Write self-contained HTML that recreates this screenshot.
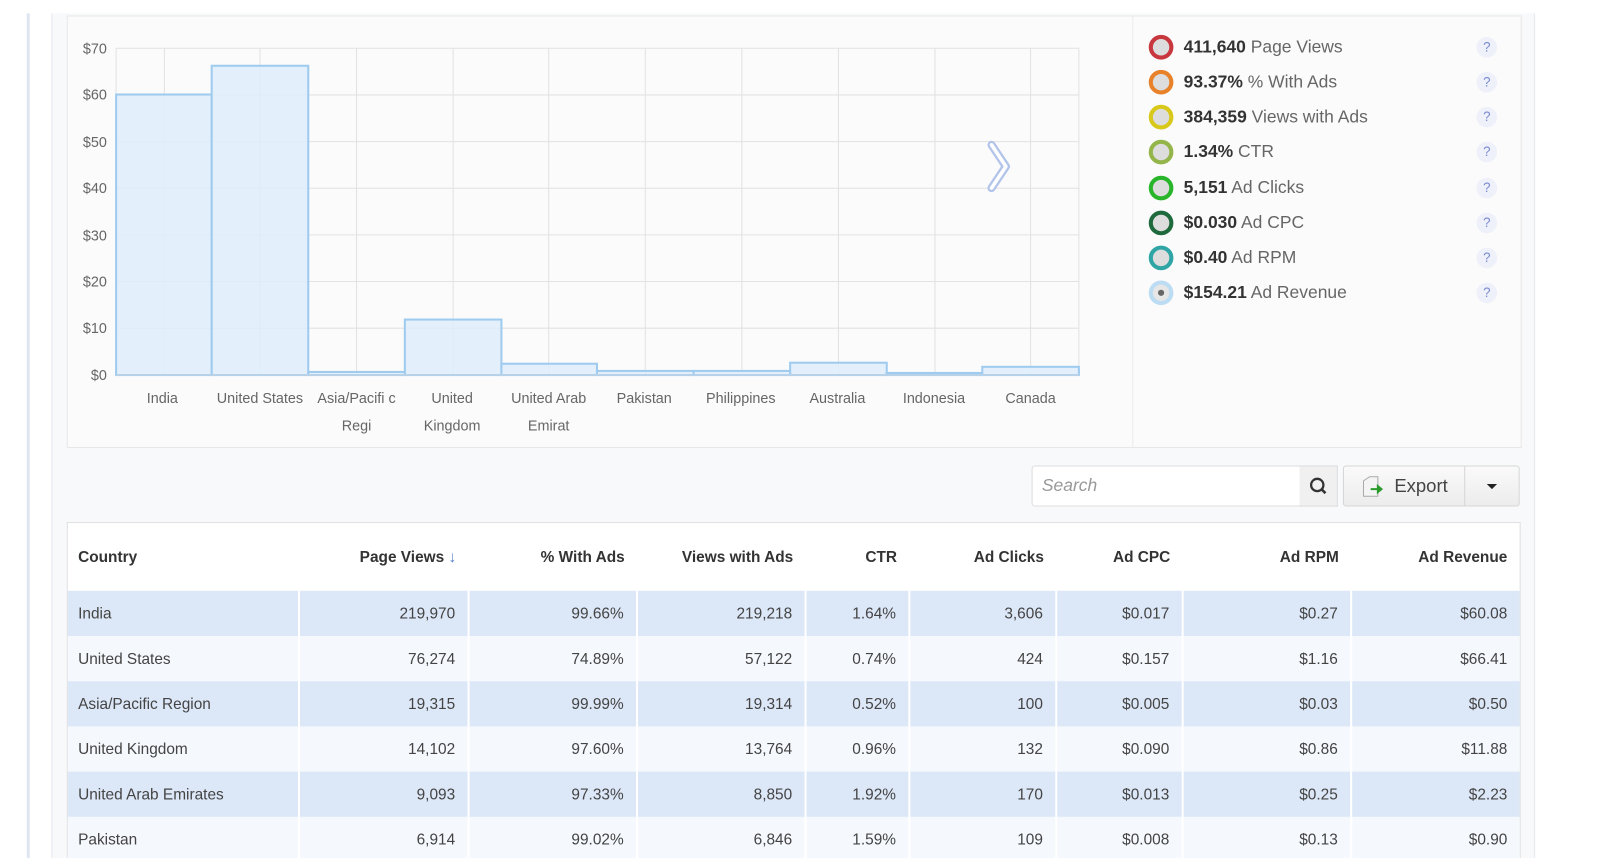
<!DOCTYPE html>
<html><head><meta charset="utf-8"><style>
html,body{margin:0;padding:0;width:1612px;height:866px;overflow:hidden;background:#fff;font-family:"Liberation Sans",sans-serif}
#w{position:absolute;left:0;top:0;width:1570px;height:843px;transform:scale(1.0275);transform-origin:0 0}
.a{position:absolute}
.lg{position:absolute;left:1118px;height:26px;font-size:17px;color:#666;line-height:26px}
.lg b{color:#333}
.dot{position:absolute;left:0;top:1px;width:16px;height:16px;border-radius:50%;border:4px solid;background:#ddd}
.lg span.t{position:absolute;left:34px;white-space:nowrap}
.q{position:absolute;left:1437px;width:20px;height:20px;border-radius:50%;background:#eef0fa;color:#7a8ad0;font-size:13px;text-align:center;line-height:20px}
table{position:absolute;left:66px;top:509px;width:1413px;border-collapse:collapse;font-size:15px;color:#444}
th{height:66px;text-align:right;padding:0 12px;color:#333;font-weight:bold}
td{height:44px;text-align:right;padding:0 12px;border-left:2px solid #fff}
tr.o td{background:#dce7f7}
tr.e td{background:#f5f8fd}
td:first-child,th:first-child{text-align:left;border-left:none;padding-left:10px}
</style></head><body><div id="w">
<div class="a" style="left:26px;top:13px;width:3px;height:822px;background:#dfe6f2"></div>
<div class="a" style="left:50px;top:13px;width:1442px;height:822px;background:#f8f9fb;border-left:1px solid #e6e9ee;border-right:1px solid #e6e9ee"></div>
<div class="a" style="left:65px;top:15px;width:1414px;height:419px;background:#fbfbfb;border:1px solid #e8e8e8"></div>
<div class="a" style="left:1102px;top:16px;width:1px;height:419px;background:#ececec"></div>
<svg class="a" style="left:65px;top:15px" width="1000" height="420" font-family="Liberation Sans" font-size="14" fill="#666">
<g stroke="#e2e2e2" stroke-width="1">
<line x1="48" y1="32" x2="985" y2="32"/><line x1="48" y1="77.4" x2="985" y2="77.4"/><line x1="48" y1="122.8" x2="985" y2="122.8"/><line x1="48" y1="168.2" x2="985" y2="168.2"/><line x1="48" y1="213.6" x2="985" y2="213.6"/><line x1="48" y1="259" x2="985" y2="259"/><line x1="48" y1="304.4" x2="985" y2="304.4"/>
<line x1="48" y1="32" x2="48" y2="350"/><line x1="985" y1="32" x2="985" y2="350"/>
<line x1="95" y1="32" x2="95" y2="350"/><line x1="188" y1="32" x2="188" y2="350"/><line x1="282" y1="32" x2="282" y2="350"/><line x1="376" y1="32" x2="376" y2="350"/><line x1="469" y1="32" x2="469" y2="350"/><line x1="563" y1="32" x2="563" y2="350"/><line x1="657" y1="32" x2="657" y2="350"/><line x1="751" y1="32" x2="751" y2="350"/><line x1="845" y1="32" x2="845" y2="350"/><line x1="938" y1="32" x2="938" y2="350"/>
</g>
<g fill="#deedfb" stroke="#9fcbef" stroke-width="2" fill-opacity=".85">
<rect x="48" y="77" width="93" height="273"/><rect x="141" y="49" width="94" height="301"/><rect x="235" y="347" width="94" height="3"/><rect x="329" y="296" width="94" height="54"/><rect x="423" y="339" width="93" height="11"/><rect x="516" y="346" width="94" height="4"/><rect x="610" y="346" width="94" height="4"/><rect x="704" y="338" width="94" height="12"/><rect x="798" y="348" width="93" height="2"/><rect x="891" y="342" width="94" height="8"/>
</g>
<line x1="48" y1="350" x2="985" y2="350" stroke="#cfd8e2"/>
<g text-anchor="end"><text x="39" y="37">$70</text><text x="39" y="82">$60</text><text x="39" y="128">$50</text><text x="39" y="173">$40</text><text x="39" y="219">$30</text><text x="39" y="264">$20</text><text x="39" y="309">$10</text><text x="39" y="355">$0</text></g>
<g text-anchor="middle"><text x="93" y="377">India</text><text x="188" y="377">United States</text><text x="282" y="377">Asia/Pacifi c</text><text x="282" y="404">Regi</text><text x="375" y="377">United</text><text x="375" y="404">Kingdom</text><text x="469" y="377">United Arab</text><text x="469" y="404">Emirat</text><text x="562" y="377">Pakistan</text><text x="656" y="377">Philippines</text><text x="750" y="377">Australia</text><text x="844" y="377">Indonesia</text><text x="938" y="377">Canada</text></g>
<path d="M900 126 L914 147 L900 168" fill="none" stroke="#b3c4ea" stroke-width="8" stroke-linejoin="round" stroke-linecap="round"/>
<path d="M900 126 L914 147 L900 168" fill="none" stroke="#fff" stroke-width="3.5" stroke-linejoin="round" stroke-linecap="round"/>
</svg>
<div class="lg" style="top:33px"><div class="dot" style="border-color:#c8373d"></div><span class="t"><b>411,640</b> Page Views</span></div>
<div class="lg" style="top:67px"><div class="dot" style="border-color:#e8822a"></div><span class="t"><b>93.37%</b> % With Ads</span></div>
<div class="lg" style="top:101px"><div class="dot" style="border-color:#d8c81a"></div><span class="t"><b>384,359</b> Views with Ads</span></div>
<div class="lg" style="top:135px"><div class="dot" style="border-color:#93b54a"></div><span class="t"><b>1.34%</b> CTR</span></div>
<div class="lg" style="top:170px"><div class="dot" style="border-color:#29b52a"></div><span class="t"><b>5,151</b> Ad Clicks</span></div>
<div class="lg" style="top:204px"><div class="dot" style="border-color:#1f6a3c"></div><span class="t"><b>$0.030</b> Ad CPC</span></div>
<div class="lg" style="top:238px"><div class="dot" style="border-color:#2fa5a5"></div><span class="t"><b>$0.40</b> Ad RPM</span></div>
<div class="lg" style="top:272px"><div class="dot" style="border-color:#bcdcf3;background:#e6e6e6"><div style="width:6px;height:6px;border-radius:50%;background:#666;margin:5px"></div></div><span class="t"><b>$154.21</b> Ad Revenue</span></div>
<div class="q" style="top:36px">?</div><div class="q" style="top:70px">?</div><div class="q" style="top:104px">?</div><div class="q" style="top:138px">?</div><div class="q" style="top:173px">?</div><div class="q" style="top:207px">?</div><div class="q" style="top:241px">?</div><div class="q" style="top:275px">?</div>
<div class="a" style="left:1004px;top:453px;width:260px;height:38px;background:#fff;border:1px solid #ddd;border-radius:3px 0 0 3px;font-size:17px;color:#999;font-style:italic;line-height:38px;text-indent:9px">Search</div>
<div class="a" style="left:1265px;top:453px;width:36px;height:38px;background:#f0f0f0;border:1px solid #ddd;border-left:none"><svg width="36" height="38"><circle cx="17" cy="18" r="6" fill="none" stroke="#333" stroke-width="2.2"/><line x1="21" y1="22" x2="25" y2="26" stroke="#333" stroke-width="2.5"/></svg></div>
<div class="a" style="left:1307px;top:453px;width:170px;height:38px;background:linear-gradient(#fafafa,#ececec);border:1px solid #d6d6d6;border-radius:3px;font-size:18px;color:#444;line-height:38px">
<svg class="a" style="left:16px;top:9px" width="26" height="22"><path d="M3 5 L9 1 H17 V20 H3 Z" fill="#f4f4f4" stroke="#aaa"/><path d="M10 12 H16 V8 L22 13 L16 18 V14 H10 Z" fill="#2a9a2a"/></svg>
<span class="a" style="left:49px">Export</span>
<div class="a" style="left:117px;top:0;width:1px;height:38px;background:#d6d6d6"></div>
<div class="a" style="left:139px;top:17px;width:0;height:0;border-left:5px solid transparent;border-right:5px solid transparent;border-top:5px solid #222"></div>
</div>
<div class="a" style="left:65px;top:508px;width:1413px;height:330px;background:#fff;border:1px solid #e0e0e0;border-bottom:none"></div>
<table>
<tr><th style="width:203px">Country</th><th style="width:141px">Page Views <span style="color:#5b7fd0">↓</span></th><th style="width:140px">% With Ads</th><th style="width:140px">Views with Ads</th><th style="width:77px">CTR</th><th style="width:119px">Ad Clicks</th><th style="width:99px">Ad CPC</th><th style="width:140px">Ad RPM</th><th>Ad Revenue</th></tr>
<tr class="o"><td>India</td><td>219,970</td><td>99.66%</td><td>219,218</td><td>1.64%</td><td>3,606</td><td>$0.017</td><td>$0.27</td><td>$60.08</td></tr>
<tr class="e"><td>United States</td><td>76,274</td><td>74.89%</td><td>57,122</td><td>0.74%</td><td>424</td><td>$0.157</td><td>$1.16</td><td>$66.41</td></tr>
<tr class="o"><td>Asia/Pacific Region</td><td>19,315</td><td>99.99%</td><td>19,314</td><td>0.52%</td><td>100</td><td>$0.005</td><td>$0.03</td><td>$0.50</td></tr>
<tr class="e"><td>United Kingdom</td><td>14,102</td><td>97.60%</td><td>13,764</td><td>0.96%</td><td>132</td><td>$0.090</td><td>$0.86</td><td>$11.88</td></tr>
<tr class="o"><td>United Arab Emirates</td><td>9,093</td><td>97.33%</td><td>8,850</td><td>1.92%</td><td>170</td><td>$0.013</td><td>$0.25</td><td>$2.23</td></tr>
<tr class="e"><td>Pakistan</td><td>6,914</td><td>99.02%</td><td>6,846</td><td>1.59%</td><td>109</td><td>$0.008</td><td>$0.13</td><td>$0.90</td></tr>
</table>
<div class="a" style="left:0;top:835px;width:1570px;height:10px;background:#fff"></div>
</div></body></html>
